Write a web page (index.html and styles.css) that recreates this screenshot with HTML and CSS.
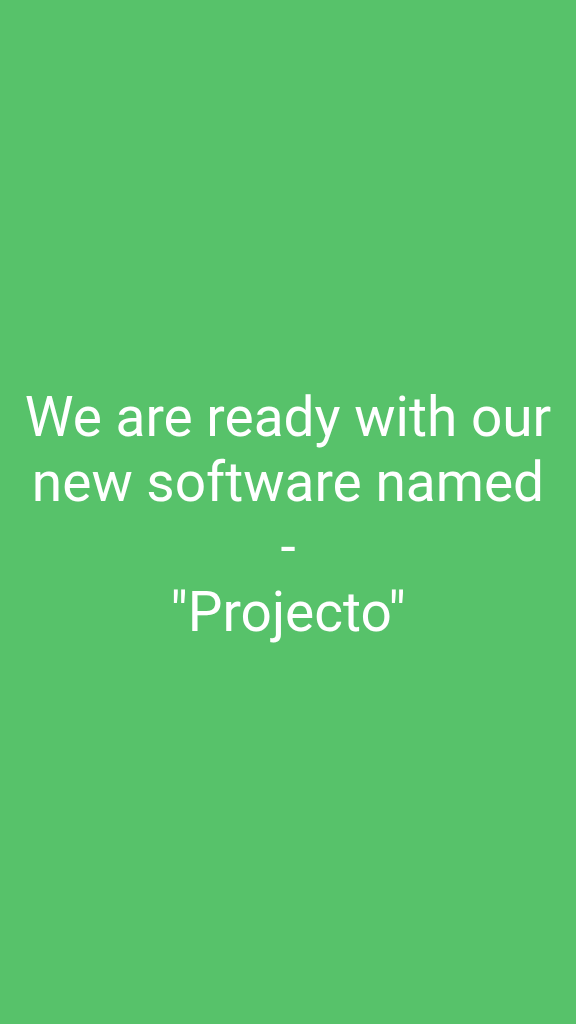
FILE: index.html
```html
<!DOCTYPE html>
<html lang="en">
<head>
    <meta charset="UTF-8">
    <meta name="viewport" content="width=device-width, initial-scale=1.0">
    <title>Projecto</title>
    <link rel="stylesheet" href="styles.css">
</head>
<body>
    <main class="screen">
        <p class="message">We are ready with our new software named<br>-<br>"Projecto"</p>
    </main>
</body>
</html>
```

FILE: styles.css
```css
body {
    margin: 0;
    background-color: #57c26a;
    font-family: Roboto, "Noto Sans", sans-serif;
}
.screen {
    height: 1024px;
    display: flex;
    justify-content: center;
    align-items: center;
    padding: 0 10px;
    box-sizing: border-box;
}
.message {
    margin: 6px 0 0;
    color: #fff;
    font-size: 55px;
    line-height: 65px;
    text-align: center;
}
```
